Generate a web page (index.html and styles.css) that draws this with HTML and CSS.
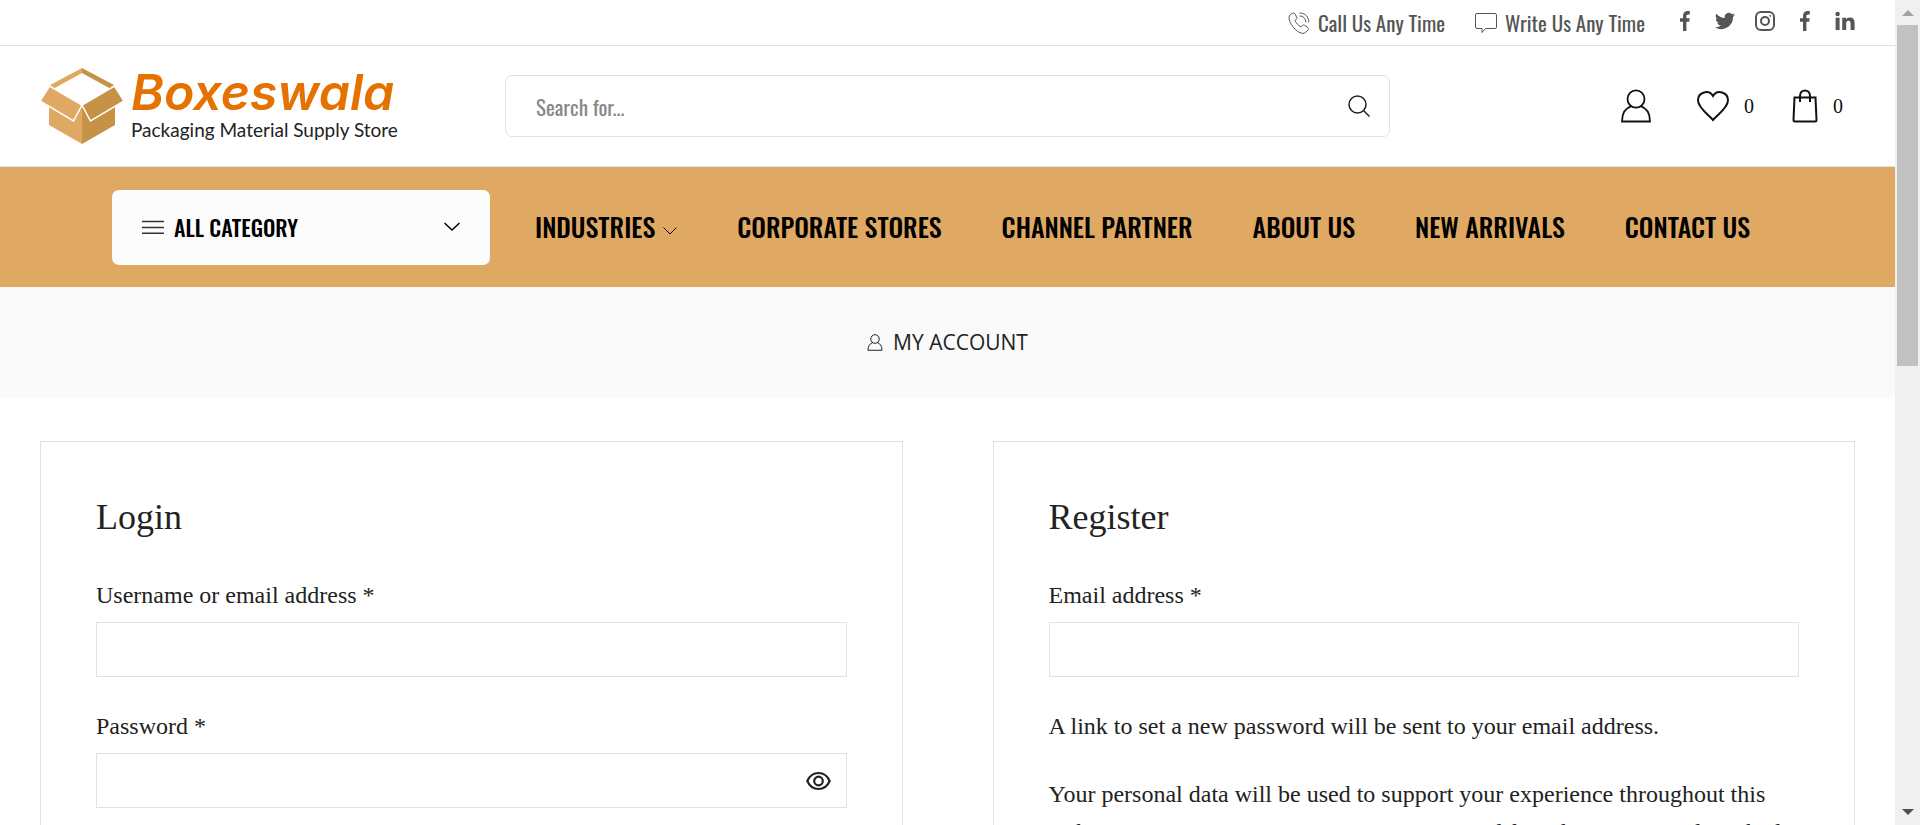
FILE: index.html
```html
<!DOCTYPE html>
<html lang="en">
<head>
<meta charset="utf-8">
<title>My Account – Boxeswala</title>
<meta name="viewport" content="width=device-width, initial-scale=1">
<link rel="stylesheet" href="styles.css">
</head>
<body>
<div class="page">
  <div class="topbar">
    <a class="contact" href="#">
      <svg width="22" height="22" viewBox="0 0 22 22" fill="none" stroke="currentColor"><path d="M5 1.200 2.400 2.600C.8 4 .5 6.700 1.900 9.700c2 4.400 5 8 9 10.500 3 1.700 5.500 1.600 7.200-.3l2-2c.8-.9.700-1.600-.2-2.300l-3.300-2.300c-.8-.6-1.600-.4-2.300.3l-1.300 1.300c-2.600-1.300-4.700-3.600-6-6.400l1.400-1.500c.6-.6.700-1.300.2-2.100L6.900 1.800C6.400 1 5.800.8 5 1.200z"/><path d="M11.500.9c5.300 0 9.300 4 9.300 9.400M11.500 3.900c3.700.1 6.200 2.700 6.300 6.400"/></svg>
      <span>Call Us Any Time</span>
    </a>
    <a class="contact" href="#">
      <svg width="22" height="22" viewBox="0 0 22 22" fill="none" stroke="currentColor"><path d="M2 1.500h18q1.500 0 1.500 1.500v12q0 1.500-1.500 1.500H10.500L7 20.500v-4H2Q.5 16.500.5 15V3Q.5 1.500 2 1.500z"/></svg>
      <span>Write Us Any Time</span>
    </a>
    <div class="social">
      <a href="#" aria-label="Facebook"><svg width="20" height="20" viewBox="0 0 20 20"><path d="M8 20v-9.300H5V7.300h3V5c0-3.300 1.900-5 4.800-5 .9 0 1.700.1 2 .1v3.300h-1.500c-1.500 0-1.900.7-1.900 1.900v2h3.300l-.5 3.400h-2.800V20z"/></svg></a>
      <a href="#" aria-label="Twitter"><svg width="20" height="20" viewBox="0 0 24 24"><path d="M23.950 4.600a10 10 0 0 1-2.800.8 5 5 0 0 0 2.100-2.700 10 10 0 0 1-3.100 1.200 4.900 4.900 0 0 0-8.400 4.500A14 14 0 0 1 1.700 3.200a4.900 4.900 0 0 0 1.500 6.500 5 5 0 0 1-2.200-.6 4.900 4.900 0 0 0 3.900 4.900 5 5 0 0 1-2.200.1 4.900 4.900 0 0 0 4.600 3.400A10 10 0 0 1 0 19.500a14 14 0 0 0 21.500-12.400 10 10 0 0 0 2.450-2.500z"/></svg></a>
      <a href="#" aria-label="Instagram"><svg width="20" height="20" viewBox="0 0 20 20" fill="none" stroke="currentColor" stroke-width="2"><rect x="1" y="1" width="18" height="18" rx="5"/><circle cx="10" cy="10" r="4"/><circle cx="15.200" cy="4.900" r=".6" stroke-width="1"/></svg></a>
      <a href="#" aria-label="Facebook page"><svg width="20" height="20" viewBox="0 0 20 20"><path d="M8 20v-9.300H5V7.300h3V5c0-3.300 1.900-5 4.800-5 .9 0 1.700.1 2 .1v3.300h-1.500c-1.500 0-1.900.7-1.900 1.900v2h3.300l-.5 3.400h-2.800V20z"/></svg></a>
      <a href="#" aria-label="LinkedIn"><svg width="20" height="20" viewBox="0 0 20 20"><path d="M.6 6.800h4V19h-4zM7.200 6.800H11v1.700c.7-1.200 2-2 3.800-2 3.800 0 4.800 2.400 4.800 5.800V19h-4v-6c0-1.600-.2-3.200-2.100-3.200S11.200 11.300 11.200 13v6h-4z"/><circle cx="2.600" cy="3" r="2.200"/></svg></a>
    </div>
  </div>

  <header class="header">
    <a class="logo" href="#">
      <svg width="84" height="78" viewBox="0 0 84 78">
        <path d="M42 1 74 18l-3 4L42 6z" fill="#c69245"/>
        <path d="M42 1 10 18l3 4L42 6z" fill="#dfa963"/>
        <path d="M9 36v22l33 19V39z" fill="#dfa963"/>
        <path d="M75 36v22L42 77V39z" fill="#c69245"/>
        <path d="M9.500 19 42 38 33.500 54 0 34z" fill="#dfa963" stroke="#fff" stroke-width="1.500"/>
        <path d="M74.500 19 42 38l8.500 16L84 34z" fill="#c69245" stroke="#fff" stroke-width="1.500"/>
      </svg>
      <span class="logo-text">
        <span class="logo-name">Boxeswala</span>
        <span class="logo-tag">Packaging Material Supply Store</span>
      </span>
    </a>
    <form class="search" role="search">
      <input type="search" placeholder="Search for..." aria-label="Search for">
      <button type="submit" aria-label="Search"><svg width="22" height="22" viewBox="0 0 22 22" fill="none" stroke="currentColor" stroke-width="1.500"><circle cx="9.500" cy="9.500" r="8.500"/><path d="m15.500 15.500 6 6"/></svg></button>
    </form>
    <div class="tools">
      <a href="#" aria-label="My account"><svg width="30" height="34" viewBox="0 0 30 34" fill="none" stroke="currentColor" stroke-width="1.800"><ellipse cx="15" cy="10" rx="8.500" ry="8.600"/><path d="M10.500 17.200C4.500 19 1 24.500 1 32.500h28c0-8-3.500-13.500-9.500-15.300"/></svg></a>
      <a href="#" aria-label="Wishlist"><svg width="32" height="34" viewBox="0 0 32 34" fill="none" stroke="currentColor" stroke-width="2"><path d="M16 31C12 26.500 1 18.500 1 11.500c0-9 11-11 15-4.500 4-6.500 15-4.500 15 4.500C31 18.500 20 26.500 16 31z"/></svg><span>0</span></a>
      <a href="#" aria-label="Cart"><svg width="26" height="34" viewBox="0 0 26 34" fill="none" stroke="currentColor" stroke-width="2"><path d="M2.500 8.500h21L24.500 31q0 1.500-1.500 1.500H3Q1.500 32.500 1.500 31z"/><path d="M8 13V7c0-7.500 10-7.500 10 0v6"/></svg><span>0</span></a>
    </div>
  </header>

  <nav class="nav">
    <button class="category" type="button">
      <svg width="22" height="14" viewBox="0 0 22 14" stroke="#333" stroke-width="1.400"><path d="M0 1.500h22M0 7.500h22M0 13.300h22"/></svg>
      <span>ALL CATEGORY</span>
      <svg class="caret" width="16" height="10" viewBox="0 0 16 10" fill="none" stroke="currentColor" stroke-width="1.500"><path d="m.5 1 7.500 7 7.500-7"/></svg>
    </button>
    <ul class="menu">
      <li><a href="#">INDUSTRIES<svg width="14" height="8" viewBox="0 0 14 8" fill="none" stroke="currentColor"><path d="m.5.5 6.500 6.500 6.500-6.500"/></svg></a></li>
      <li><a href="#">CORPORATE STORES</a></li>
      <li><a href="#">CHANNEL PARTNER</a></li>
      <li><a href="#">ABOUT US</a></li>
      <li><a href="#">NEW ARRIVALS</a></li>
      <li><a href="#">CONTACT US</a></li>
    </ul>
  </nav>

  <div class="crumb">
    <a href="#"><svg width="16" height="17" viewBox="0 0 30 34" fill="none" stroke="currentColor" stroke-width="2"><ellipse cx="15" cy="10" rx="8.500" ry="8.600"/><path d="M10.500 17.200C4.500 19 1 24.500 1 32.500h28c0-8-3.500-13.500-9.500-15.300"/></svg>MY ACCOUNT</a>
  </div>

  <main class="forms">
    <form class="card">
      <h2>Login</h2>
      <label for="user">Username or email address *</label>
      <div class="field"><input id="user" type="text"></div>
      <label for="pass">Password *</label>
      <div class="field">
        <input id="pass" type="password">
        <button type="button" aria-label="Show password"><svg width="25" height="20" viewBox="0 0 25 20" fill="none" stroke="currentColor" stroke-width="2.200"><path d="M1.300 10C3.500 5 7.500 2 12.500 2s9 3 11.200 8c-2.200 5-6.200 8-11.200 8s-9-3-11.200-8z"/><circle cx="12.500" cy="10" r="4.300"/></svg></button>
      </div>
    </form>
    <form class="card">
      <h2>Register</h2>
      <label for="email">Email address *</label>
      <div class="field"><input id="email" type="email"></div>
      <p>A link to set a new password will be sent to your email address.</p>
      <p>Your personal data will be used to support your experience throughout this website, to manage access to your account, and for other purposes described in our privacy policy.</p>
    </form>
  </main>
</div>
<div class="scrollbar" aria-hidden="true">
  <svg width="12" height="6" viewBox="0 0 12 6"><path d="m0 6 6-6 6 6z" fill="#a3a3a3"/></svg>
  <div class="track"><div class="thumb"></div></div>
  <svg width="12" height="6" viewBox="0 0 12 6"><path d="m0 0 6 6 6-6z" fill="#505050"/></svg>
</div>
</body>
</html>
```
FILE: styles.css
```css
* { box-sizing: border-box; }

body {
  display: flex;
  height: 100vh;
  margin: 0;
  overflow: hidden;
  background: #fff;
  color: #222;
  font-family: "Liberation Serif", "Times New Roman", serif;
  font-size: 24px;
  line-height: 38px;
}

a { color: inherit; text-decoration: none; }
svg { display: block; flex: none; }
button { padding: 0; border: 0; background: none; color: inherit; cursor: pointer; }

.page { flex: 1; min-width: 0; overflow: hidden; }

.topbar, .contact, .search input, .nav {
  font-family: Oswald, "Roboto Condensed", "Liberation Sans Narrow", "Liberation Sans", sans-serif;
}

.topbar {
  display: flex;
  justify-content: flex-end;
  align-items: center;
  gap: 30px;
  height: 46px;
  padding: 0 40px;
  border-bottom: 1px solid #e1e1e1;
  color: #555;
  font-size: 21px;
  line-height: 44px;
}
.contact { display: flex; align-items: center; gap: 8px; }
.social { display: flex; gap: 20px; padding-bottom: 4px; }
.social svg { fill: currentColor; }
.social svg[fill="none"] { fill: none; }

.header {
  display: flex;
  align-items: center;
  height: 120px;
  padding: 0 40px;
}
.logo { display: flex; align-items: center; gap: 7px; width: 465px; }
.logo-text { display: flex; flex-direction: column; }
.logo-name {
  color: #e57200;
  font-family: Inter, sans-serif;
  font-size: 50px;
  font-style: italic;
  font-weight: 600;
  line-height: 48px;
}
.logo-tag {
  color: #222;
  font-family: Lato, sans-serif;
  font-size: 19px;
  line-height: 28px;
}

.search {
  display: flex;
  align-items: center;
  width: 885px;
  height: 62px;
  padding: 0 19px 0 30px;
  border: 1px solid #e1e1e1;
  border-radius: 7px;
}
.search input {
  flex: 1;
  min-width: 0;
  padding: 0;
  border: 0;
  outline: 0;
  background: none;
  font-size: 21px;
}
.search input::placeholder { color: #888; opacity: 1; }

.tools {
  display: flex;
  gap: 38px;
  margin-left: auto;
  padding-right: 12px;
  color: #111;
  font-size: 20px;
}
.tools a { display: flex; align-items: center; gap: 15px; }
.tools a:first-child { margin-right: 8px; }

.nav {
  display: flex;
  align-items: center;
  gap: 45px;
  height: 121px;
  padding: 0 112px;
  border-top: 1px solid #e1e1e1;
  background: #e0a963;
  color: #000;
}
.category {
  display: flex;
  align-items: center;
  gap: 10px;
  flex: 0 0 378px;
  height: 75px;
  padding: 0 30px;
  border-radius: 7px;
  background: #fcfcfc;
  font-family: inherit;
  font-size: 22px;
  font-weight: 500;
}
.caret { margin-left: auto; }
.menu {
  display: flex;
  gap: 60px;
  margin: 0;
  padding: 0;
  list-style: none;
  font-size: 26px;
  font-weight: 500;
  white-space: nowrap;
}
.menu a { display: flex; align-items: center; gap: 8px; }
.menu svg { margin-top: 8px; }

.crumb {
  display: flex;
  justify-content: center;
  align-items: center;
  height: 110px;
  background: #fafafa;
  font-family: "Open Sans", sans-serif;
  font-size: 21px;
}
.crumb a { display: flex; align-items: center; gap: 10px; }

.forms {
  display: grid;
  grid-template-columns: 1fr 1fr;
  gap: 90px;
  padding: 44px 40px;
}
.card { padding: 54px 55px; border: 1px solid #e1e1e1; }
.card h2 {
  margin: 0 0 38px;
  font-size: 36px;
  font-weight: 400;
  line-height: 42px;
}
.card label { display: block; margin-bottom: 8px; }
.card p { margin: 0 0 30px; }
.field {
  display: flex;
  align-items: center;
  height: 55px;
  margin-bottom: 30px;
  padding: 0 15px;
  border: 1px solid #e1e1e1;
}
.field input {
  flex: 1;
  min-width: 0;
  height: 100%;
  padding: 0;
  border: 0;
  outline: 0;
  background: none;
  font: inherit;
}

.scrollbar {
  display: flex;
  flex-direction: column;
  align-items: center;
  flex: 0 0 25px;
  gap: 9px;
  padding: 10px 2px;
  background: #f0f0f0;
}
.track { flex: 1; width: 100%; }
.thumb { height: 44%; background: #c1c1c1; }
```
